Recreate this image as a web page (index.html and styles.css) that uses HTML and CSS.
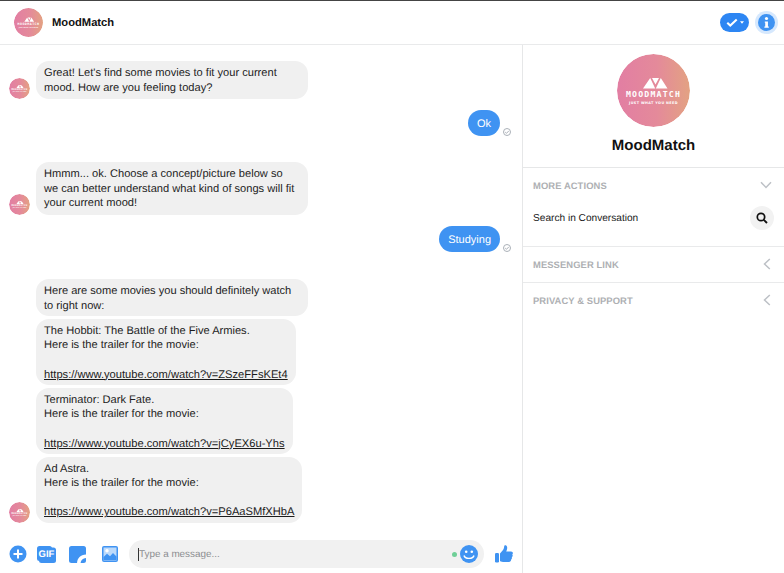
FILE: index.html
```html
<!DOCTYPE html>
<html lang="en">
<head>
<meta charset="utf-8">
<title>MoodMatch</title>
<link rel="stylesheet" href="styles.css">
</head>
<body>
<div class="app">
  <header class="topbar">
    <div class="logo logo-md"><svg viewBox="0 0 73 73"><use href="#mark"/></svg></div>
    <div class="title">MoodMatch</div>
    <div class="top-actions">
      <div class="check-pill">
        <svg width="12" height="9" viewBox="0 0 14 10"><path d="M1.5 5.2 5 8.500 12.500 1.500" fill="none" stroke="#fff" stroke-width="2.400"/></svg>
        <svg width="4" height="3" viewBox="0 0 5 3"><path d="M0 0h5L2.500 3z" fill="#fff"/></svg>
      </div>
      <div class="info-halo">
        <svg width="20" height="20" viewBox="0 0 20 20"><circle cx="10" cy="10" r="10" fill="#3f93f2"/><circle cx="10" cy="5.300" r="1.900" fill="#fff"/><path d="M8 8.800h3.700v6h1v1.500H7.500v-1.500h1v-4.500H8z" fill="#fff"/></svg>
      </div>
    </div>
  </header>
  <div class="main">
    <section class="chat">
      <div class="thread">
        <div class="row">
          <div class="logo logo-sm"><svg viewBox="0 0 73 73"><use href="#mark"/></svg></div>
          <div class="bubble b-272">Great! Let's find some movies to fit your current<br>mood. How are you feeling today?</div>
        </div>
        <div class="row-out row-ok">
          <div class="bubble-out">Ok</div>
          <svg class="sent" width="8" height="8" viewBox="0 0 8 8"><circle cx="4" cy="4" r="3.500" fill="none" stroke="#aab0b8"/><path d="M2.200 4.100 3.500 5.300 5.800 2.900" fill="none" stroke="#aab0b8"/></svg>
        </div>
        <div class="row row-q">
          <div class="logo logo-sm"><svg viewBox="0 0 73 73"><use href="#mark"/></svg></div>
          <div class="bubble b-272">Hmmm... ok. Choose a concept/picture below so<br>we can better understand what kind of songs will fit<br>your current mood!</div>
        </div>
        <div class="row-out row-study">
          <div class="bubble-out">Studying</div>
          <svg class="sent" width="8" height="8" viewBox="0 0 8 8"><circle cx="4" cy="4" r="3.500" fill="none" stroke="#aab0b8"/><path d="M2.200 4.100 3.500 5.300 5.800 2.900" fill="none" stroke="#aab0b8"/></svg>
        </div>
        <div class="group">
          <div class="stack">
            <div class="bubble b-272">Here are some movies you should definitely watch<br>to right now:</div>
            <div class="bubble">The Hobbit: The Battle of the Five Armies.<br>Here is the trailer for the movie:<br><br><a href="#">https://www.youtube.com/watch?v=ZSzeFFsKEt4</a></div>
            <div class="bubble">Terminator: Dark Fate.<br>Here is the trailer for the movie:<br><br><a href="#">https://www.youtube.com/watch?v=jCyEX6u-Yhs</a></div>
            <div class="last-row">
              <div class="logo logo-sm"><svg viewBox="0 0 73 73"><use href="#mark"/></svg></div>
              <div class="bubble">Ad Astra.<br>Here is the trailer for the movie:<br><br><a href="#">https://www.youtube.com/watch?v=P6AaSMfXHbA</a></div>
            </div>
          </div>
        </div>
      </div>
      <footer class="composer">
        <svg class="ic-plus" width="18" height="18" viewBox="0 0 18 18"><circle cx="9" cy="9" r="8.500" fill="#3f93f2"/><path d="M9 4.500v9M4.500 9h9" stroke="#fff" stroke-width="2"/></svg>
        <div class="gif">
          <svg width="19" height="17" viewBox="0 0 19 17"><rect x="0" y="0" width="15" height="15" rx="2.500" fill="#3f93f2"/><rect x="2" y="1.500" width="17" height="15.500" rx="2.500" fill="#3f93f2"/></svg>
          <span class="gif-label">GIF</span>
        </div>
        <svg class="ic-sticker" width="17" height="17" viewBox="0 0 17 17"><rect width="17" height="17" rx="2.500" fill="#3f93f2"/><path d="M8 18C8 12 11.500 8.500 18 8.500V12C14 12 11.500 14 11.500 18z" fill="#fff"/></svg>
        <svg class="ic-image" width="16" height="16" viewBox="0 0 16 16"><rect width="16" height="16" rx="2" fill="#3f93f2"/><rect x="1.500" y="1.500" width="13" height="13" fill="#bcdafb"/><circle cx="5" cy="4.800" r="1.700" fill="#fff"/><path d="M1.500 11 5 7.800l3 2.400 3-3.200 3.500 3.500v3.500h-13z" fill="#3f93f2"/></svg>
        <div class="input">
          <span class="caret"></span><span class="placeholder">Type a message...</span>
          <span class="dot"></span>
          <svg width="18" height="18" viewBox="0 0 18 18"><circle cx="9" cy="9" r="9" fill="#3f93f2"/><circle cx="6.200" cy="6.800" r="1.300" fill="#fff"/><circle cx="11.800" cy="6.800" r="1.300" fill="#fff"/><path d="M4 10.500c1 3.800 9 3.800 10 0" fill="none" stroke="#fff" stroke-width="1.400"/></svg>
        </div>
        <svg class="ic-like" width="18" height="18" viewBox="0 0 18 18"><rect x="0" y="8" width="4" height="9.500" rx="1.200" fill="#3f93f2"/><path d="M5 8.500 8 5c1-1.400 1.200-3 1.200-4 0-1 2.800-1.200 3 1.500.1 1.500-.5 3-1 4h4.800c2 0 2.400 2.300 1.200 3 .9 1 .5 2.300-.4 2.700.4 1 0 2.100-.8 2.500.2 1.200-.6 2.300-2 2.300H8c-1.500 0-3-.8-3-1z" fill="#3f93f2"/></svg>
      </footer>
    </section>
    <aside class="side">
      <div class="profile">
        <div class="logo logo-lg"><svg viewBox="0 0 73 73"><use href="#mark"/></svg></div>
        <div class="profile-name">MoodMatch</div>
      </div>
      <div class="panel panel-more">
        <div class="panel-head"><span>MORE ACTIONS</span><svg width="12" height="8" viewBox="0 0 12 8"><path d="M1 1.200 6 6.500l5-5.300" fill="none" stroke="#bdc1c6" stroke-width="1.500"/></svg></div>
        <div class="search-row"><span>Search in Conversation</span>
          <div class="search-btn"><svg width="12" height="12" viewBox="0 0 12 12"><circle cx="5" cy="5" r="3.700" fill="none" stroke="#111" stroke-width="1.700"/><path d="M7.800 7.800 11 11" stroke="#111" stroke-width="1.900"/></svg></div>
        </div>
      </div>
      <div class="panel panel-link">
        <div class="panel-head"><span>MESSENGER LINK</span><svg class="chev-left" width="8" height="12" viewBox="0 0 8 12"><path d="M6.800 1 1.500 6l5.300 5" fill="none" stroke="#bdc1c6" stroke-width="1.500"/></svg></div>
      </div>
      <div class="panel panel-privacy">
        <div class="panel-head"><span>PRIVACY &amp; SUPPORT</span><svg class="chev-left" width="8" height="12" viewBox="0 0 8 12"><path d="M6.800 1 1.500 6l5.300 5" fill="none" stroke="#bdc1c6" stroke-width="1.500"/></svg></div>
      </div>
    </aside>
  </div>
</div>
<svg class="defs" width="0" height="0">
  <defs>
    <linearGradient id="grad" x1="0" y1="0" x2="1" y2="0"><stop offset="0" stop-color="#e27ea3"/><stop offset="0.55" stop-color="#e48a9a"/><stop offset="1" stop-color="#e3a282"/></linearGradient>
    <g id="mark">
      <circle cx="36.500" cy="36.500" r="36.500" fill="url(#grad)"/>
      <path d="M26 34.500 33.200 24l5 10.500zM38.800 34.500 43.800 24 50.500 34.500zM35 24h7l-3.500 6.500z" fill="#fff"/>
      <text x="36.500" y="42.500" text-anchor="middle" font-family="'DejaVu Sans Mono',monospace" font-size="8.200" font-weight="700" letter-spacing="1.200" fill="#fff">MOODMATCH</text>
      <text x="36.500" y="50" text-anchor="middle" font-family="'DejaVu Sans',sans-serif" font-size="3.400" font-weight="700" letter-spacing="0.400" fill="#fff">JUST WHAT YOU NEED</text>
    </g>
  </defs>
</svg>
</body>
</html>
```

FILE: styles.css
```css
* { box-sizing: border-box; }
html, body { margin: 0; padding: 0; }
body { width: 784px; height: 573px; overflow: hidden; background: #fff; font-family: "Liberation Sans", Arial, sans-serif; color: #111; text-rendering: geometricPrecision; }
.defs { position: absolute; }
.app { display: flex; flex-direction: column; height: 573px; border-top: 1px solid #444; }
.topbar { height: 44px; flex: none; display: flex; align-items: center; padding: 0 6px 0 14px; border-bottom: 1px solid #e9eaeb; }
.logo { flex: none; border-radius: 50%; overflow: hidden; }
.logo svg { display: block; width: 100%; height: 100%; }
.logo-md { width: 29px; height: 29px; }
.logo-sm { width: 21px; height: 21px; }
.logo-lg { width: 73px; height: 73px; }
.title { margin-left: 9px; font-size: 11.200px; font-weight: 700; color: #111; }
.top-actions { margin-left: auto; display: flex; align-items: center; gap: 6px; }
.check-pill { width: 29px; height: 19px; border-radius: 10px; background: #2d86f3; display: flex; align-items: center; justify-content: center; gap: 2px; }
.info-halo { width: 23px; height: 23px; border-radius: 50%; background: #d6e8fd; display: flex; align-items: center; justify-content: center; }
.info-halo svg { width: 17px; height: 17px; }
.main { flex: 1; display: flex; min-height: 0; }
.chat { width: 523px; flex: none; border-right: 1px solid #e6e7e8; display: flex; flex-direction: column; }
.thread { flex: 1; min-height: 0; padding: 16px 22px 0 9px; font-size: 11.100px; line-height: 14.600px; color: #1c1c1c; }
.row { display: flex; align-items: flex-end; gap: 6px; }
.bubble { background: #f0f0f0; border-radius: 13px; padding: 5px 8px 4px; width: fit-content; }
.b-272 { width: 272px; }
.bubble a { color: #1c1c1c; }
.row-out { display: flex; justify-content: flex-end; position: relative; }
.bubble-out { background: #3f93f2; color: #fff; border-radius: 13px; padding: 7px 9px 5px; font-size: 11px; line-height: 14px; }
.sent { position: absolute; right: -11px; bottom: 0; }
.row-ok { margin-top: 11px; }
.row-q { margin-top: 26px; }
.row-study { margin-top: 11px; }
.group { margin-top: 27px; padding-left: 27px; }
.stack { display: flex; flex-direction: column; gap: 2.600px; }
.stack .bubble { padding-bottom: 3px; }
.stack .bubble a { font-size: 11.150px; }
.last-row { display: flex; align-items: flex-end; gap: 6px; margin-left: -27px; }
.composer { height: 38px; flex: none; display: flex; align-items: center; padding: 0 0 0 9px; }
.gif { margin-left: 10px; width: 19px; height: 17px; position: relative; display: flex; align-items: center; justify-content: center; }
.gif svg { position: absolute; left: 0; top: 0; }
.gif-label { position: relative; font-size: 9.500px; font-weight: 700; color: #fff; }
.ic-sticker { margin-left: 13px; }
.ic-image { margin-left: 16px; }
.input { margin-left: 11px; width: 355px; height: 28px; border-radius: 14px; background: #f1f1f1; display: flex; align-items: center; padding: 0 6px 0 9px; }
.caret { width: 1px; height: 13px; background: #333; }
.placeholder { font-size: 9.900px; color: #8b8d90; flex: 1; }
.dot { width: 5px; height: 5px; border-radius: 50%; background: #6fcf97; margin-right: 3px; }
.ic-like { margin-left: 11px; }
.side { flex: 1; min-width: 0; }
.profile { height: 123px; border-bottom: 1px solid #e6e7e8; display: flex; flex-direction: column; align-items: center; padding-top: 9px; }
.profile-name { margin-top: 10px; font-size: 15px; font-weight: 700; color: #111; }
.panel { padding: 0 10px; border-bottom: 1px solid #e9eaeb; }
.panel-head { display: flex; align-items: center; justify-content: space-between; height: 35px; padding-bottom: 1px; font-size: 9.400px; font-weight: 700; color: #aeb0b3; letter-spacing: .1px; }
.panel-head svg { margin-right: 2px; }
.panel-head .chev-left { margin-right: 3px; }
.panel-more { height: 79px; }
.panel-privacy { border-bottom: 0; }
.search-row { display: flex; align-items: center; justify-content: space-between; font-size: 10.130px; color: #1a1a1a; height: 30px; }
.search-row span { padding-top: 1px; }
.search-btn { width: 24px; height: 24px; border-radius: 50%; background: #f2f2f2; display: flex; align-items: center; justify-content: center; }
```
